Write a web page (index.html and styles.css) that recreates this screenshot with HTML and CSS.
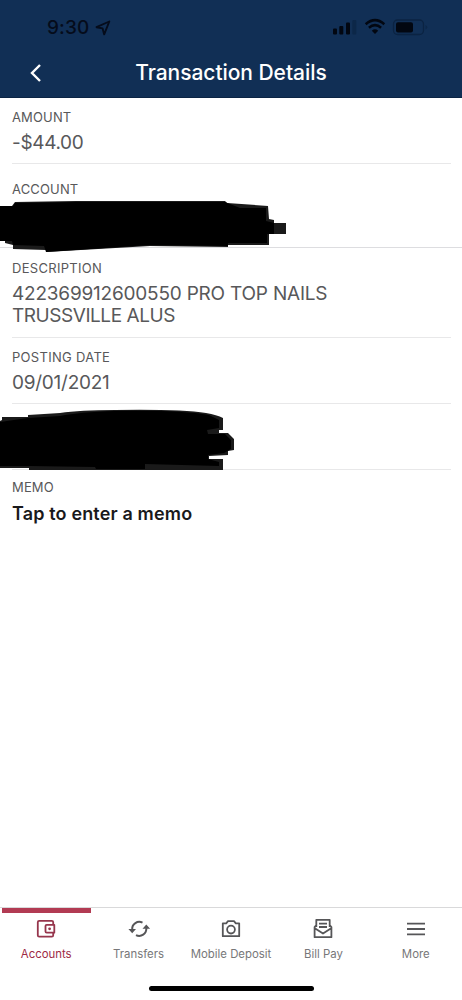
FILE: index.html
```html
<!DOCTYPE html>
<html lang="en">
<head>
<meta charset="utf-8">
<title>Transaction Details</title>
<link rel="stylesheet" href="styles.css">
</head>
<body>
<div class="app">
  <header class="header">
    <div class="status">
      <span class="time">9:30</span>
      <svg class="location" width="16" height="16" viewBox="0 0 16 16"><path d="M14.3 1.5L1.5 7.2L7.6 8.4L9.2 14.4Z"/></svg>
      <svg class="indicators" width="96" height="18" viewBox="0 0 96 18">
        <rect x="1" y="10.5" width="4" height="6" rx="1"/>
        <rect x="7.3" y="8" width="4" height="8.5" rx="1"/>
        <rect x="14" y="4.5" width="4" height="12" rx="1"/>
        <rect class="dim" x="20.3" y="2" width="4" height="14.5" rx="1"/>
        <g class="waves"><path d="M33.7 6.2Q43 -2 52.3 6.2"/><path d="M36.9 9.8Q43 4.4 49.1 9.8"/></g>
        <path d="M39.8 12.7Q43 10 46.2 12.7L43 16Z"/>
        <rect class="shell" x="61.5" y="2" width="30" height="14.5" rx="4"/>
        <rect x="64" y="4.2" width="17" height="10.2" rx="2"/>
        <path class="dim" d="M93.5 7Q97 9.2 93.5 11.5Z"/>
      </svg>
    </div>
    <div class="navbar">
      <svg class="back" width="14" height="20" viewBox="0 0 14 20"><path d="M12 2L4 10L12 18"/></svg>
      <h1 class="title">Transaction Details</h1>
    </div>
  </header>
  <main class="details">
    <section class="row amount"><div class="label">AMOUNT</div><div class="value money">-$44.00</div></section>
    <section class="row account"><div class="label">ACCOUNT</div>
      <svg class="mark mark-account" width="290" height="56" viewBox="0 0 290 56">
        <path class="edge" d="M0 6H12L15 2L76 1H225L227 3L268 6L269 19L274 20V23H286V34H269V45H228V47L150 46L46 52V50L13 49V45L5 43V41H0Z"/>
        <path d="M0 6H13L15 3L76 2H225L240 8H266V21L274 23V34H267V43H228V46L150 45L46 52L44 46L13 45L12 41H0Z"/>
      </svg>
    </section>
    <section class="row description"><div class="label description-label">DESCRIPTION</div><div class="value"><span class="payee">422369912600550 PRO TOP NAILS</span><br><span class="place">TRUSSVILLE ALUS</span></div></section>
    <section class="row posting"><div class="label posting-label">POSTING DATE</div><div class="value date">09/01/2021</div></section>
    <section class="row hidden-row">
      <svg class="mark mark-hidden" width="240" height="64" viewBox="0 0 240 64">
        <path class="edge" d="M0 15L2 14V11H28V9L60 7Q80 4 115 4Q180 3 206 7Q217 9 223 12V24H219V27H228L234 33V44L228 45V49L209 50V53H223V64H29V62H0Z"/>
        <path d="M0 16L28 12L60 10Q80 6 115 5Q180 4 209 9L219 14V22L207 24L208 28H225L231 34V43L224 47L208 49V53L219 56V60L145 58V63H96L95 61L29 60H0Z"/>
      </svg>
    </section>
    <section class="memo"><div class="label memo-label">MEMO</div><div class="memo-entry">Tap to enter a memo</div></section>
  </main>
  <nav class="tabs">
    <a class="tab active">
      <svg class="icon" width="24" height="24" viewBox="0 0 24 24"><path d="M19.2 7V5.2Q19.2 3.8 17.8 3.8H5.2Q3.8 3.8 3.8 5.2V18.3Q3.8 19.7 5.2 19.7H17.8Q19.2 19.7 19.2 18.3V16.3M12.7 7.8H20.3V15.7H12.7Q11.5 15.7 11.5 14.5V9Q11.5 7.8 12.7 7.8Z"/><circle class="solid" cx="15.6" cy="11.8" r="1.4"/></svg>
      <span>Accounts</span>
    </a>
    <a class="tab">
      <svg class="icon swap" width="24" height="24" viewBox="0 0 24 24"><path d="M5.2 12.5A7.1 7.1 0 0 1 15.5 5.7M19.3 11.2A7.1 7.1 0 0 1 9 18.1"/><path class="solid" d="M1.4 12H9L5.2 16.2ZM15.5 11.8L19.3 7.6L23.1 11.8Z"/></svg>
      <span>Transfers</span>
    </a>
    <a class="tab">
      <svg class="icon" width="24" height="24" viewBox="0 0 24 24"><path d="M3.8 6.3H7.2L9 4.2H15L16.8 6.3H20.2V19.2H3.8Z"/><circle cx="12" cy="12.6" r="3.9"/></svg>
      <span>Mobile Deposit</span>
    </a>
    <a class="tab">
      <svg class="icon" width="24" height="24" viewBox="0 0 24 24"><path d="M5.3 10V2.8H18.7V10M5.3 8L3.6 10V20.2H20.4V10L18.7 8M3.8 11.2L12 16.5L20.2 11.2M8 6.7H16M8 10H16"/></svg>
      <span>Bill Pay</span>
    </a>
    <a class="tab">
      <svg class="icon" width="24" height="24" viewBox="0 0 24 24"><path d="M3 6.7H21M3 12H21M3 17.3H21"/></svg>
      <span>More</span>
    </a>
  </nav>
  <div class="home"><div class="home-bar"></div></div>
</div>
</body>
</html>
```

FILE: styles.css
```css
* { box-sizing: border-box; }
body { margin: 0; background: #fff; font-family: Inter, "Liberation Sans", sans-serif; color: #58585a; }
svg { display: block; flex: none; }
.app { width: 462px; height: 1000px; display: flex; flex-direction: column; overflow: hidden; }
.header { height: 98px; flex: none; background: #112f55; border-bottom: 1px solid #0b2444; }
.status { height: 48px; padding: 7px 34px 0 47px; display: flex; align-items: center; color: #050c1b; }
.time { width: 48px; font-size: 19px; font-weight: 500; letter-spacing: .1px; white-space: nowrap; }
.location { fill: none; stroke: #050c1b; stroke-width: 1.9; stroke-linejoin: round; }
.indicators { margin-left: auto; margin-top: -1px; fill: #020711; }
.indicators .dim { fill: #0c2748; }
.waves { fill: none; stroke: #020711; stroke-width: 2.5; }
.indicators .shell { fill: none; stroke: #0b2342; stroke-width: 1.3; }
.navbar { height: 49px; display: grid; grid-template-columns: 60px 1fr 60px; align-items: center; }
.back { margin-left: 28px; fill: none; stroke: #fff; stroke-width: 2.4; }
.title { margin: 0; color: #fff; text-align: center; font-size: 21px; font-weight: 500; letter-spacing: -.05px; line-height: 28px; white-space: nowrap; }
.details { flex: 1; }
.row { margin: 0 11px 0 12px; border-bottom: 1px solid #e8e8e9; position: relative; }
.label { font-size: 13px; line-height: 16px; letter-spacing: .15px; white-space: nowrap; }
.description-label, .posting-label { letter-spacing: .3px; }
.value { font-size: 19px; line-height: 22px; padding-top: 7px; white-space: nowrap; }
.money { letter-spacing: -.35px; }
.payee { letter-spacing: -.21px; }
.place { letter-spacing: -.45px; }
.date { letter-spacing: -.25px; }
.amount { height: 66px; padding-top: 11px; }
.account { height: 84px; padding-top: 17px; margin: 0; padding-left: 12px; border-color: #dddde0; }
.description { height: 90px; padding-top: 12px; }
.posting { height: 66px; padding-top: 11px; }
.hidden-row { height: 66px; }
.memo { padding: 9px 12px; }
.memo-entry { padding-top: 7px; font-size: 18px; line-height: 24px; font-weight: 600; letter-spacing: .15px; color: #19191b; white-space: nowrap; }
.mark { position: absolute; fill: #000; }
.mark .edge { fill: #1a1a1a; }
.mark-account { left: 0; top: 36px; }
.mark-hidden { left: -12px; top: 2px; }
.tabs { height: 68px; flex: none; display: grid; grid-template-columns: repeat(5, 1fr); border-top: 1px solid #d9d9da; }
.tab { display: flex; flex-direction: column; align-items: center; padding-top: 9px; position: relative; font-size: 11.4px; line-height: 16px; color: #777779; white-space: nowrap; }
.tab span { padding-top: 5px; }
.active { color: #9d2945; }
.active::before { content: ""; position: absolute; left: 2px; right: 1px; top: 0; height: 5px; background: #b23b53; }
.icon { fill: none; stroke: #565658; stroke-width: 1.8; stroke-linejoin: round; }
.swap { stroke-width: 2; }
.icon .solid { fill: #565658; stroke: none; }
.active .icon { stroke: #96354c; }
.active .solid { fill: #96354c; }
.home { height: 25px; flex: none; display: flex; justify-content: center; padding-top: 11px; }
.home-bar { width: 165px; height: 5px; border-radius: 3px; background: #000; }
```
